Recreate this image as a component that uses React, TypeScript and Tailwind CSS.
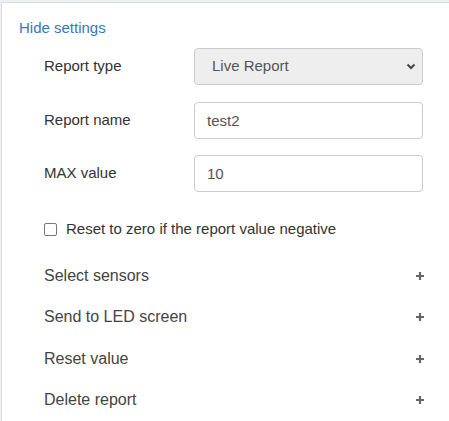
import React from "react";

function Plus() {
  return (
    <svg width="10" height="10" viewBox="0 0 10 10" className="block">
      <path d="M5 1v8M1 5h8" stroke="#666" strokeWidth="2.2" />
    </svg>
  );
}

function Chevron() {
  return (
    <svg width="10" height="7" viewBox="0 0 10 7" className="block">
      <path d="M1.5 1.5L5 5L8.5 1.5" stroke="#444" strokeWidth="2" fill="none" />
    </svg>
  );
}

export default function App() {
  const rows = ["Select sensors", "Send to LED screen", "Reset value", "Delete report"];
  return (
    <div
      className="min-h-screen bg-[#eef0f4] pt-[2px] pl-[1px]"
      style={{ fontFamily: '"Liberation Sans", Arial, sans-serif' }}
    >
      <div className="bg-white border-l border-t border-[#dadde3] min-h-[419px] w-[460px]">
        <div className="pl-[17px] pt-[15px]">
          <a className="block text-[15px] leading-[20px] text-[#337ab7] cursor-pointer">Hide settings</a>
        </div>
        <div className="pl-[42px] w-[448px] pr-[27px] mt-[10px]">
          <div className="flex items-center h-[37px]">
            <label className="w-[150px] text-[15px] text-[#333]">Report type</label>
            <div className="relative flex-1 h-[37px] rounded-[4px] border border-[#ccc] bg-[#eee] flex items-center pl-[17px] text-[15px] text-[#555]">
              Live Report
              <span className="absolute right-[6px] top-[14px]">
                <Chevron />
              </span>
            </div>
          </div>
          <div className="flex items-center h-[37px] mt-[17px]">
            <label className="w-[150px] text-[15px] text-[#333]">Report name</label>
            <input
              readOnly
              value="test2"
              className="flex-1 h-[37px] rounded-[4px] border border-[#ccc] bg-white px-[12px] text-[15px] text-[#555] outline-none"
            />
          </div>
          <div className="flex items-center h-[37px] mt-[16px]">
            <label className="w-[150px] text-[15px] text-[#333]">MAX value</label>
            <input
              readOnly
              value="10"
              className="flex-1 h-[37px] rounded-[4px] border border-[#ccc] bg-white px-[12px] text-[15px] text-[#555] outline-none"
            />
          </div>
          <div className="flex items-center h-[20px] mt-[27px]">
            <span className="w-[13px] h-[13px] rounded-[2px] border border-[#767676] bg-white" />
            <span className="ml-[9px] text-[15px] text-[#333]">Reset to zero if the report value negative</span>
          </div>
          <div className="mt-[16px] -mr-[2px]">
            {rows.map((r, i) => (
              <div key={r} className={`flex items-center justify-between ${i === 1 ? "h-[42px]" : "h-[41px]"}`}>
                <span className="text-[16px] text-[#444]">{r}</span>
                <Plus />
              </div>
            ))}
          </div>
        </div>
      </div>
    </div>
  );
}
